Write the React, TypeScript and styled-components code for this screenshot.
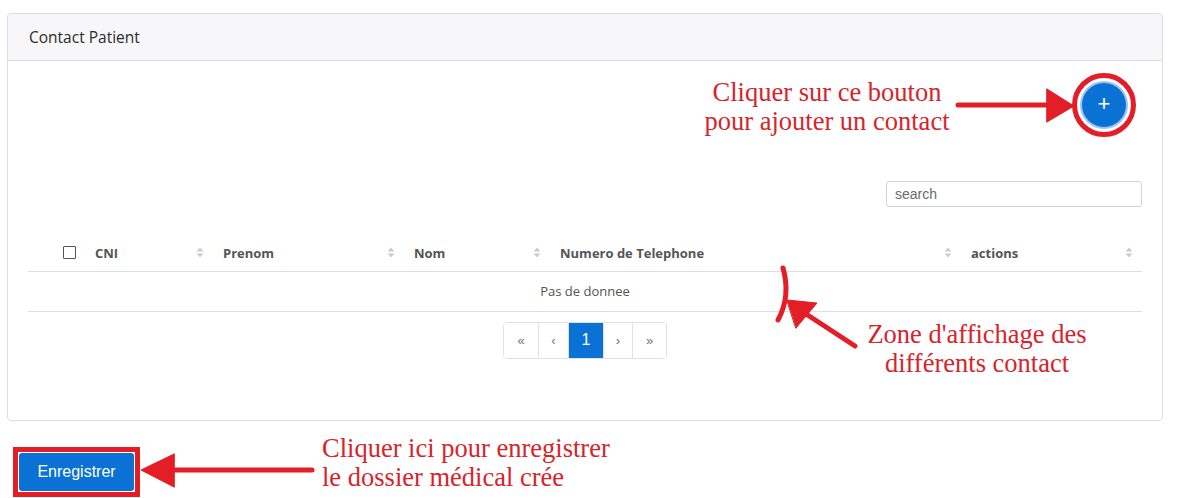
import React from "react";
import styled, { createGlobalStyle } from "styled-components";

const GlobalStyle = createGlobalStyle`
  html, body { margin: 0; padding: 0; background: #ffffff; }
  body { font-family: "Open Sans", "Noto Sans", sans-serif; color: #333; }
  * { box-sizing: border-box; }
`;

const Page = styled.div`
  position: relative;
  width: 1182px;
  height: 498px;
  padding: 13px 19px 0 7px;
  overflow: hidden;
`;

const Card = styled.section`
  border: 1px solid #dedede;
  border-radius: 4px;
  background: #fff;
`;

const CardHeader = styled.header`
  height: 47px;
  display: flex;
  align-items: center;
  padding: 0 21px 1px;
  background: #f7f7f9;
  border-bottom: 1px solid #dedede;
  border-radius: 4px 4px 0 0;
  font-size: 15.5px;
  color: #2b2b2b;
`;

const CardBody = styled.div`
  padding: 22px 20px 61px;
`;

const Toolbar = styled.div`
  display: flex;
  justify-content: flex-end;
  padding-right: 16px;
`;

const FabButton = styled.button`
  width: 44px;
  height: 44px;
  border-radius: 50%;
  border: none;
  background: #0b72d5;
  color: #fff;
  font-family: "Liberation Sans", Arial, sans-serif;
  font-size: 22px;
  line-height: 1;
  display: flex;
  align-items: center;
  justify-content: center;
  padding: 0 0 2px;
  box-shadow: 0 0 0 2px #9fc4ec;
  outline: 5px solid #e31e26;
  outline-offset: 5px;
`;

const SearchRow = styled.div`
  display: flex;
  justify-content: flex-end;
  margin-top: 54px;
`;

const SearchInput = styled.input`
  width: 256px;
  height: 26px;
  border: 1px solid #cfd4d9;
  border-radius: 3px;
  padding: 0 8px;
  font-family: "Liberation Sans", Arial, sans-serif;
  font-size: 14px;
  color: #333;
  &::placeholder { color: #6b6b6b; }
`;

const Table = styled.table`
  width: 100%;
  margin-top: 28px;
  border-collapse: collapse;
  table-layout: fixed;
`;

const Th = styled.th`
  height: 36px;
  padding: 0;
  border-bottom: 1px solid #dcdfe3;
  text-align: left;
  font-size: 13px;
  font-weight: 700;
  color: #555;
`;

const ThInner = styled.div`
  display: flex;
  align-items: center;
  justify-content: space-between;
  padding: 0 9px 0 10px;
`;

const CheckCell = styled.div`
  display: flex;
  align-items: center;
  padding-left: 35px;
`;

const CheckBox = styled.span`
  width: 13px;
  height: 13px;
  border: 1px solid #555;
  border-radius: 1px;
  background: #fff;
`;

const Td = styled.td`
  height: 40px;
  border-bottom: 1px solid #dcdfe3;
  text-align: center;
  font-size: 13px;
  color: #555;
  padding: 0;
`;

const Pagination = styled.nav`
  display: flex;
  justify-content: center;
  margin-top: 10px;
`;

const PageList = styled.ul`
  display: flex;
  list-style: none;
  margin: 0;
  padding: 0;
  border: 1px solid #dee2e6;
  border-radius: 4px;
  overflow: hidden;
`;

const PageItem = styled.li<{ $w: number; $active?: boolean }>`
  width: ${(p) => p.$w}px;
  height: 35px;
  display: flex;
  align-items: center;
  justify-content: center;
  font-family: "Liberation Sans", Arial, sans-serif;
  font-size: ${(p) => (p.$active ? "16px" : "13px")};
  color: ${(p) => (p.$active ? "#fff" : "#6c757d")};
  background: ${(p) => (p.$active ? "#0b72d5" : "#fff")};
  & + & { border-left: 1px solid #dee2e6; }
`;

const Footer = styled.div`
  padding: 26px 0 0 6px;
`;

const SaveFrame = styled.span`
  display: inline-block;
  border: 5px solid #e31e26;
  padding: 1px;
  line-height: 0;
`;

const SaveButton = styled.button`
  width: 115px;
  height: 38px;
  border: none;
  border-radius: 3px;
  background: #0b72d5;
  color: #fff;
  font-family: "Liberation Sans", Arial, sans-serif;
  font-size: 16px;
  line-height: 38px;
  padding: 0;
`;

const Note = styled.div<{ $top: number; $left: number; $width: number; $align: string }>`
  position: absolute;
  top: ${(p) => p.$top}px;
  left: ${(p) => p.$left}px;
  width: ${(p) => p.$width}px;
  text-align: ${(p) => p.$align};
  font-family: "Liberation Serif", "Times New Roman", serif;
  font-size: 26.5px;
  line-height: 29px;
  color: #d8232b;
  white-space: nowrap;
`;

const Overlay = styled.svg`
  position: absolute;
  left: 0;
  top: 0;
  pointer-events: none;
`;

const SortIcon = () => (
  <svg width="8" height="11" viewBox="0 0 8 11">
    <path d="M4 0.5 L7.5 4.5 L0.5 4.5 Z" fill="#c9ccd1" />
    <path d="M4 10.5 L7.5 6.5 L0.5 6.5 Z" fill="#c9ccd1" />
  </svg>
);

const columns = [
  { label: "CNI", width: 128 },
  { label: "Prenom", width: 191 },
  { label: "Nom", width: 146 },
  { label: "Numero de Telephone", width: 411 },
  { label: "actions", width: 181 },
];

const pages = [
  { label: "«", w: 34 },
  { label: "‹", w: 30 },
  { label: "1", w: 35, active: true },
  { label: "›", w: 29 },
  { label: "»", w: 34 },
];

export default function App() {
  return (
    <>
      <GlobalStyle />
      <Page>
        <Card>
          <CardHeader>Contact Patient</CardHeader>
          <CardBody>
            <Toolbar>
              <FabButton aria-label="ajouter">+</FabButton>
            </Toolbar>
            <SearchRow>
              <SearchInput placeholder="search" />
            </SearchRow>
            <Table>
              <colgroup>
                <col style={{ width: 57 }} />
                {columns.map((c) => (
                  <col key={c.label} style={{ width: c.width }} />
                ))}
              </colgroup>
              <thead>
                <tr>
                  <Th>
                    <CheckCell>
                      <CheckBox />
                    </CheckCell>
                  </Th>
                  {columns.map((c) => (
                    <Th key={c.label}>
                      <ThInner>
                        <span>{c.label}</span>
                        <SortIcon />
                      </ThInner>
                    </Th>
                  ))}
                </tr>
              </thead>
              <tbody>
                <tr>
                  <Td colSpan={6}>Pas de donnee</Td>
                </tr>
              </tbody>
            </Table>
            <Pagination>
              <PageList>
                {pages.map((p) => (
                  <PageItem key={p.label} $w={p.w} $active={p.active}>
                    {p.label}
                  </PageItem>
                ))}
              </PageList>
            </Pagination>
          </CardBody>
        </Card>
        <Footer>
          <SaveFrame>
            <SaveButton>Enregistrer</SaveButton>
          </SaveFrame>
        </Footer>

        <Note $top={78} $left={677} $width={300} $align="center">
          Cliquer sur ce bouton
          <br />
          pour ajouter un contact
        </Note>
        <Note $top={320} $left={827} $width={300} $align="center">
          Zone d'affichage des
          <br />
          différents contact
        </Note>
        <Note $top={434} $left={322} $width={320} $align="left">
          Cliquer ici pour enregistrer
          <br />
          le dossier médical crée
        </Note>

        <Overlay width="1182" height="498" viewBox="0 0 1182 498">
          <g fill="#e31e26" stroke="#e31e26" strokeLinecap="round" strokeLinejoin="round">
            <line x1="958" y1="105" x2="1050" y2="105" strokeWidth="5" />
            <path d="M1047 89 L1074 106 L1047 122 Z" strokeWidth="1" />
            <line x1="312" y1="470" x2="170" y2="470" strokeWidth="5" />
            <path d="M174 454 L141 470 L174 487 Z" strokeWidth="1" />
            <path d="M783 268 Q791 296 778 320" fill="none" strokeWidth="5" />
            <line x1="855" y1="346" x2="803" y2="312" strokeWidth="5" />
            <path d="M787 300 L817 303 L796 328 Z" strokeWidth="1" />
          </g>
        </Overlay>
      </Page>
    </>
  );
}
